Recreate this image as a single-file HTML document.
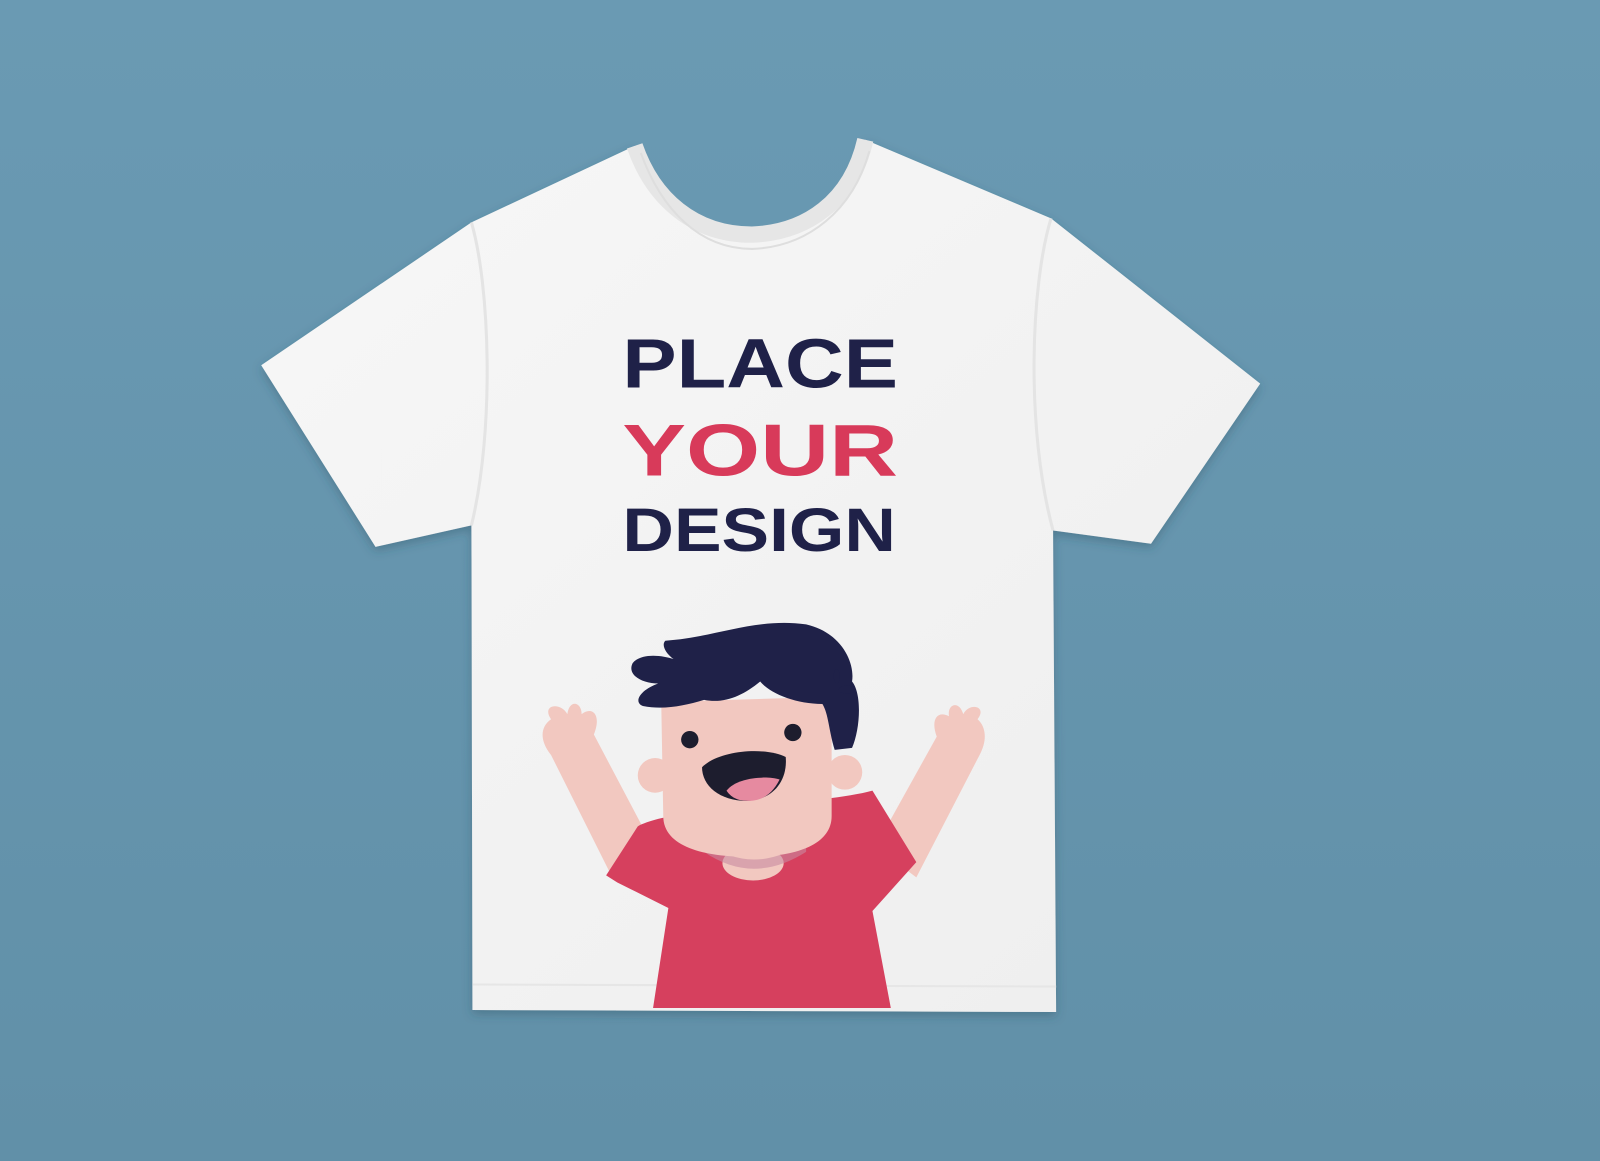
<!DOCTYPE html>
<html><head><meta charset="utf-8"><style>
html,body{margin:0;padding:0;width:1600px;height:1161px;overflow:hidden;background:#6898b0}
svg{display:block}
</style></head><body>
<svg width="1600" height="1161" viewBox="0 0 1568 1138" preserveAspectRatio="none">
<defs>
<linearGradient id="bg" x1="0" y1="0" x2="0" y2="1"><stop offset="0" stop-color="#6a9ab3"/><stop offset="1" stop-color="#6190a8"/></linearGradient>
<linearGradient id="sh" x1="0" y1="0" x2="1" y2="1"><stop offset="0" stop-color="#f7f7f7"/><stop offset="1" stop-color="#eeeeee"/></linearGradient>
<filter id="ds" x="-10%" y="-10%" width="120%" height="120%"><feDropShadow dx="0" dy="4" stdDeviation="5" flood-color="#2a4a5a" flood-opacity="0.35"/></filter>
</defs>
<rect width="1568" height="1138" fill="url(#bg)"/>
<path filter="url(#ds)" fill="url(#sh)" d="M622,143 L462,218 L256,358 L368,536 L462,515 L463,990 L1035,992 L1032,520 L1128,533 L1235,376 L1030,214 L848,137 C834,198 790,228 737,230 C680,230 640,195 622,143 Z"/>
<path d="M622,143 C640,195 680,230 737,230 C790,228 834,198 848,137" fill="none" stroke="#e6e6e6" stroke-width="16"/>
<path d="M628,150 C648,205 685,244 737,244 C792,242 836,206 852,148" fill="none" stroke="#dedede" stroke-width="2"/>
<path d="M462,218 C480,280 485,420 462,515" fill="none" stroke="#e4e4e4" stroke-width="3"/>
<path d="M1030,214 C1010,280 1005,420 1032,520" fill="none" stroke="#e4e4e4" stroke-width="3"/>
<path d="M463,965 L1035,967" stroke="#e6e6e6" stroke-width="2"/>
<g font-family="Liberation Sans, sans-serif" font-weight="bold" text-anchor="start">
<text x="610" y="380" font-size="68" fill="#1f2148" textLength="270" lengthAdjust="spacingAndGlyphs">PLACE</text>
<text x="610" y="466" font-size="72" fill="#d83a5a" textLength="270" lengthAdjust="spacingAndGlyphs">YOUR</text>
<text x="610" y="540" font-size="60" fill="#1f2148" textLength="268" lengthAdjust="spacingAndGlyphs">DESIGN</text>
</g>
<!-- arms -->
<path d="M540,705 C530,690 550,688 556,700 C558,685 570,688 570,700 C580,692 590,700 582,720 L640,830 L600,860 L540,740 C528,725 530,712 540,705 Z" fill="#f2c8c0"/>
<path d="M958,705 C968,692 950,688 944,700 C940,686 928,690 930,702 C918,696 912,706 918,722 L858,830 L898,860 L960,740 C968,725 966,712 958,705 Z" fill="#f2c8c0"/>
<!-- shirt -->
<path d="M625,810 C660,790 800,790 855,775 L898,845 L855,893 L873,988 L640,988 L655,890 L605,865 L594,858 Z" fill="#d6405e"/>
<!-- neck -->
<ellipse cx="738" cy="846" rx="30" ry="17" fill="#f2c8c0"/>
<path d="M690,825 Q738,860 790,825 L790,835 Q738,868 690,835Z" fill="#c88aa0" opacity="0.6"/>
<!-- ears -->
<circle cx="642" cy="760" r="17" fill="#f2c8c0"/>
<circle cx="828" cy="757" r="17" fill="#f2c8c0"/>
<!-- face -->
<path d="M648,688 L815,683 L815,800 C815,828 780,840 735,840 C690,840 650,830 650,800 Z" fill="#f2c8c0"/>
<!-- hair -->
<path d="M652,628 C700,625 740,605 790,612 C825,620 838,650 835,668 C845,680 843,715 835,733 L818,735 C812,715 812,700 806,690 C780,690 755,680 745,668 C728,682 710,690 690,686 C670,692 650,696 630,692 C620,688 628,676 645,670 C630,670 614,662 620,650 C628,640 648,642 660,646 C652,640 648,632 652,628 Z" fill="#1f2148"/>
<ellipse cx="820" cy="663" rx="3" ry="7" fill="#1f2148"/>
<ellipse cx="830" cy="676" rx="8" ry="4" fill="#1f2148"/>
<!-- eyes -->
<circle cx="676" cy="725" r="8.5" fill="#1d1d2e"/>
<circle cx="777" cy="718" r="8.5" fill="#1d1d2e"/>
<!-- mouth -->
<path d="M688,752 C705,735 750,732 770,742 C772,765 758,784 732,785 C705,785 688,770 688,752 Z" fill="#1d1d2e"/>
<path d="M712,775 C722,762 750,760 764,764 C756,780 745,785 733,785 C722,785 716,781 712,775 Z" fill="#e68aa0"/>
</svg>
</body></html>
